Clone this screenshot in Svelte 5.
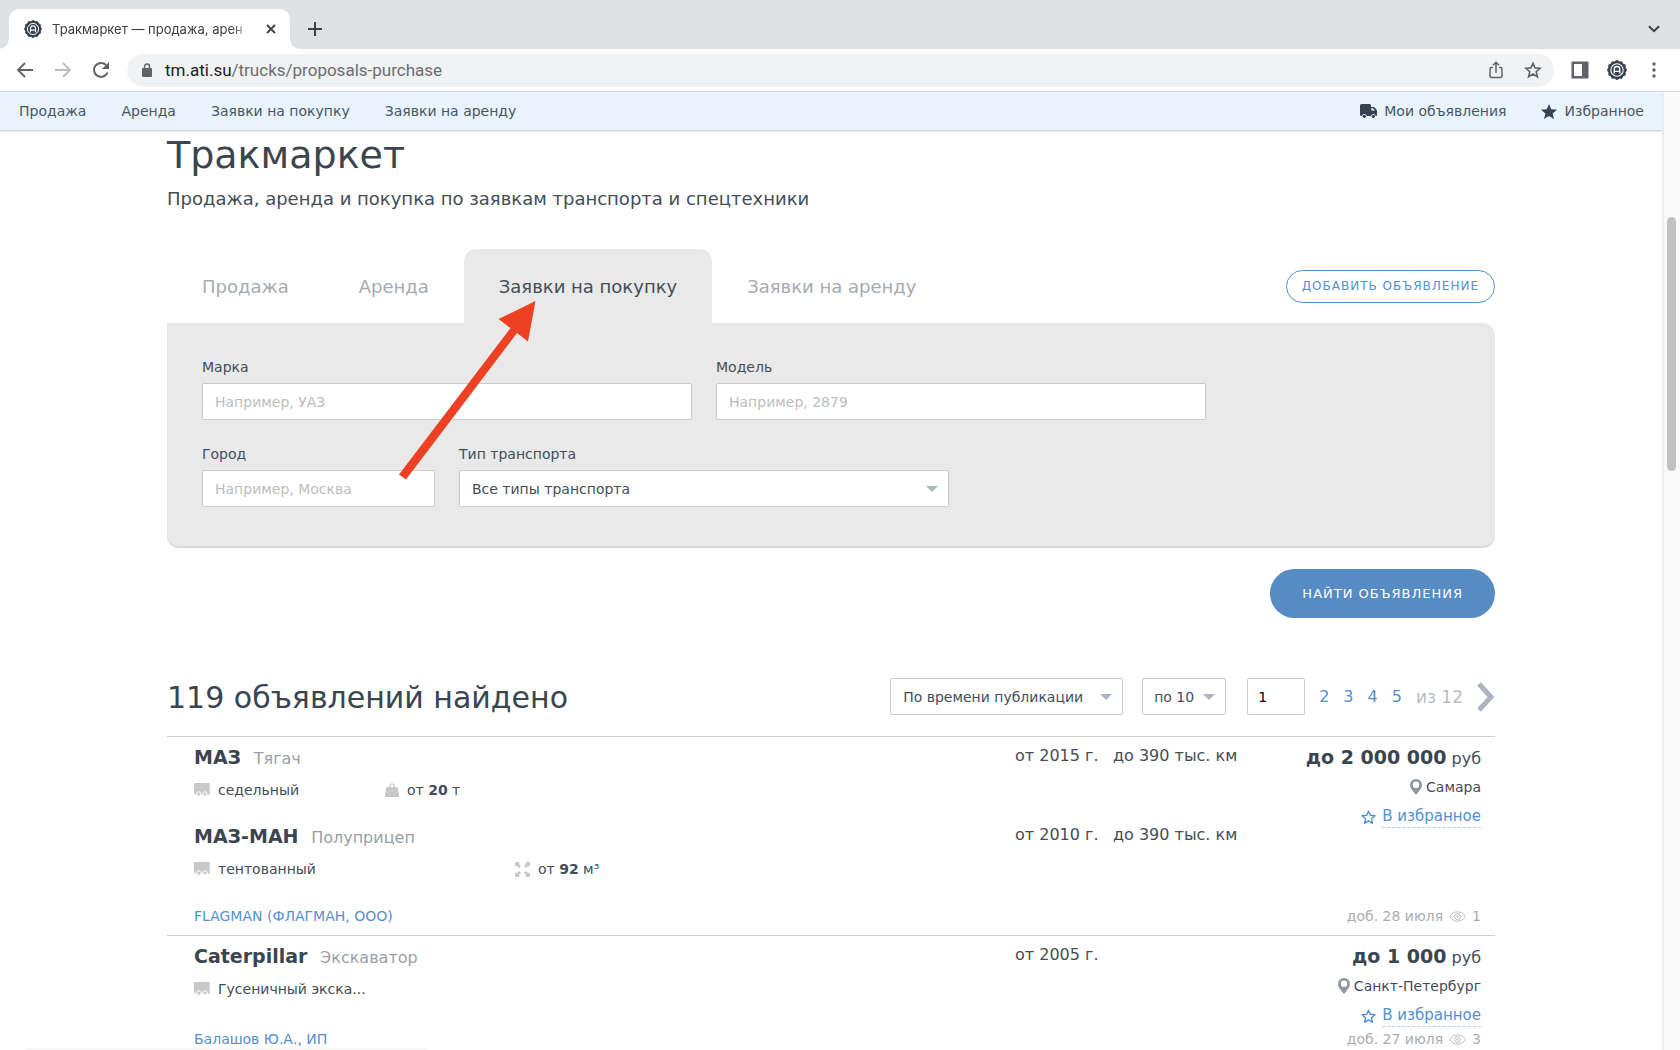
<script>
  let brand = $state("");
  let model = $state("");
  let city = $state("");
  let page = $state("1");
  let activeTab = $state(2);

  const navLinks = ["Продажа", "Аренда", "Заявки на покупку", "Заявки на аренду"];
  const pages = [2, 3, 4, 5];

  // bumps around the edge of the round logo
  const bumps = Array.from({ length: 12 }, (_, i) => ({
    x: 10 + 8 * Math.cos((i * Math.PI) / 6),
    y: 10 + 8 * Math.sin((i * Math.PI) / 6)
  }));

  const offers = [
    {
      vehicles: [
        {
          name: "МАЗ",
          type: "Тягач",
          body: "седельный",
          weight: "20",
          year: "от 2015 г.",
          mileage: "до 390 тыс. км"
        },
        {
          name: "МАЗ-МАН",
          type: "Полуприцеп",
          body: "тентованный",
          volume: "92",
          year: "от 2010 г.",
          mileage: "до 390 тыс. км"
        }
      ],
      price: "до 2 000 000",
      city: "Самара",
      firm: "FLAGMAN (ФЛАГМАН, ООО)",
      added: "доб. 28 июля",
      views: 1
    },
    {
      vehicles: [
        {
          name: "Caterpillar",
          type: "Экскаватор",
          body: "Гусеничный экска...",
          year: "от 2005 г."
        }
      ],
      price: "до 1 000",
      city: "Санкт-Петербург",
      firm: "Балашов Ю.А., ИП",
      added: "доб. 27 июля",
      views: 3
    }
  ];
</script>

{#snippet logo(size)}
  <svg width={size} height={size} viewBox="0 0 20 20" aria-hidden="true">
    <g fill="#36424f">
      <circle cx="10" cy="10" r="9" />
      {#each bumps as b}
        <circle cx={b.x} cy={b.y} r="1.9" />
      {/each}
    </g>
    <circle cx="10" cy="10" r="6.2" fill="none" stroke="#fff" stroke-width="1.1" />
    <path d="M7.2 13.6V9.3a2.8 2.8 0 0 1 5.6 0v4.3M7.2 11.3h5.6" fill="none" stroke="#fff" stroke-width="1.3" />
  </svg>
{/snippet}

{#snippet star()}
  <svg width="15" height="15" viewBox="0 0 15 15" aria-hidden="true">
    <path
      d="M7.5 1.2l1.8 4.1 4.7.4-3.6 3 1.1 4.6-4-2.5-4 2.5 1.100-4.600L1 5.700l4.700-.4z"
      fill="none"
      stroke="#5290d0"
      stroke-width="1.4"
      stroke-linejoin="round" />
  </svg>
{/snippet}

<div class="window">
  <div class="tabstrip">
    <div class="browser-tab">
      {@render logo(18)}
      <span class="tab-title">Тракмаркет — продажа, арен</span>
      <button class="icon-btn" aria-label="Закрыть вкладку">
        <svg width="12" height="12" viewBox="0 0 12 12">
          <path d="M2 2l8 8M10 2l-8 8" stroke="#3c4043" stroke-width="1.8" />
        </svg>
      </button>
    </div>
    <button class="icon-btn new-tab" aria-label="Новая вкладка">
      <svg width="16" height="16" viewBox="0 0 16 16">
        <path d="M8 1v14M1 8h14" stroke="#3c4043" stroke-width="2" />
      </svg>
    </button>
    <button class="icon-btn tab-search" aria-label="Поиск вкладок">
      <svg width="12" height="8" viewBox="0 0 12 8">
        <path d="M1 1.2l5 5 5-5" fill="none" stroke="#3c4043" stroke-width="2" />
      </svg>
    </button>
  </div>

  <div class="toolbar">
    <div class="history">
      <button class="icon-btn" aria-label="Назад">
        <svg width="18" height="18" viewBox="0 0 18 18">
          <path d="M17 9H2.5M9 2L2 9l7 7" fill="none" stroke="#5f6368" stroke-width="1.8" />
        </svg>
      </button>
      <button class="icon-btn" aria-label="Вперёд">
        <svg width="18" height="18" viewBox="0 0 18 18">
          <path d="M1 9h14.5M9 2l7 7-7 7" fill="none" stroke="#babcbe" stroke-width="1.8" />
        </svg>
      </button>
      <button class="icon-btn" aria-label="Обновить">
        <svg width="18" height="18" viewBox="0 0 18 18">
          <path d="M15.5 11.5A7 7 0 1 1 14 4" fill="none" stroke="#5f6368" stroke-width="2" />
          <path d="M17 1v7h-7z" fill="#5f6368" />
        </svg>
      </button>
    </div>
    <div class="address">
      <svg width="12" height="14" viewBox="0 0 12 14" aria-hidden="true">
        <rect x="1" y="5" width="10" height="9" rx="1" fill="#5f6368" />
        <path d="M3.5 6V3.5a2.5 2.5 0 0 1 5 0V6" fill="none" stroke="#5f6368" stroke-width="1.5" />
      </svg>
      <span class="url"><b>tm.ati.su</b>/trucks/proposals-purchase</span>
      <button class="icon-btn" aria-label="Поделиться">
        <svg width="16" height="18" viewBox="0 0 16 18">
          <path
            d="M5 6.500H3a1 1 0 0 0-1 1V15a1.500 1.500 0 0 0 1.500 1.500h9A1.500 1.500 0 0 0 14 15V7.500a1 1 0 0 0-1-1h-2M8 12V1.500M5 4.300l3-3 3 3"
            fill="none"
            stroke="#5f6368"
            stroke-width="1.5" />
        </svg>
      </button>
      <button class="icon-btn" aria-label="В закладки">
        <svg width="18" height="18" viewBox="0 0 18 18">
          <path
            d="M9 2.200l2 4.700 5.100.4-3.900 3.400 1.200 5L9 13l-4.400 2.700 1.200-5L1.900 7.300 7 6.900z"
            fill="none"
            stroke="#5f6368"
            stroke-width="1.6" />
        </svg>
      </button>
    </div>
    <div class="tools">
      <button class="icon-btn" aria-label="Боковая панель">
        <svg width="18" height="18" viewBox="0 0 18 18">
          <path d="M.5.5h17v17H.5zM3 3v12h8V3z" fill="#5f6368" fill-rule="evenodd" />
        </svg>
      </button>
      <button class="icon-btn" aria-label="Профиль">{@render logo(20)}</button>
      <button class="icon-btn" aria-label="Меню">
        <svg width="4" height="16" viewBox="0 0 4 16" fill="#5f6368">
          <circle cx="2" cy="2" r="1.7" />
          <circle cx="2" cy="8" r="1.7" />
          <circle cx="2" cy="14" r="1.7" />
        </svg>
      </button>
    </div>
  </div>

  <div class="viewport">
    <div class="site">
      <nav class="topnav">
        {#each navLinks as link}
          <a href="#top">{link}</a>
        {/each}
        <a href="#mine" class="push">
          <svg width="17" height="14" viewBox="0 0 17 14" fill="#36424f" aria-hidden="true">
            <path
              d="M1.500 0h8A1.500 1.500 0 0 1 11 1.500V3h2.300a2 2 0 0 1 1.400.6l1.700 1.900a2 2 0 0 1 .6 1.400V11a1 1 0 0 1-1 1h-.3a2.400 2.400 0 0 0-4.700 0H6.700a2.400 2.400 0 0 0-4.700 0h-.5A1.500 1.500 0 0 1 0 10.500v-9A1.500 1.500 0 0 1 1.500 0zm9.800 4.300v2.200h3.700l-2-2.200z"
              fill-rule="evenodd" />
            <circle cx="4.4" cy="12.3" r="1.6" />
            <circle cx="13.4" cy="12.3" r="1.6" />
          </svg>
          Мои объявления
        </a>
        <a href="#favourites">
          <svg width="16" height="15" viewBox="0 0 16 15" fill="#36424f" aria-hidden="true">
            <path d="M8 0l2.200 5.300 5.800.4-4.400 3.700L13 15l-5-3.100L3 15l1.400-5.600L0 5.700l5.800-.4z" />
          </svg>
          Избранное
        </a>
      </nav>

      <main>
        <h1>Тракмаркет</h1>
        <p class="lead">Продажа, аренда и покупка по заявкам транспорта и спецтехники</p>

        <form class="search" onsubmit={(e) => e.preventDefault()}>
          <div class="search-tabs">
            {#each navLinks as link, i}
              <button
                type="button"
                class="search-tab"
                class:active={activeTab === i}
                onclick={() => (activeTab = i)}>{link}</button>
            {/each}
            <button type="button" class="add">Добавить объявление</button>
          </div>

          <div class="filters">
            <div class="field wide">
              <label for="brand">Марка</label>
              <input id="brand" placeholder="Например, УАЗ" bind:value={brand} />
            </div>
            <div class="field wide">
              <label for="model">Модель</label>
              <input id="model" placeholder="Например, 2879" bind:value={model} />
            </div>
            <div class="field first">
              <label for="city">Город</label>
              <input id="city" placeholder="Например, Москва" bind:value={city} />
            </div>
            <div class="field wide">
              <label for="kind">Тип транспорта</label>
              <div class="select">
                <select id="kind"><option>Все типы транспорта</option></select>
              </div>
            </div>
          </div>

          <button class="find">Найти объявления</button>

          <svg class="pointer" width="138" height="180" viewBox="0 0 138 180" aria-hidden="true">
            <path d="M136.500 0L99.500 18l12 9L0 173.500l7 5L118 32l11 8.500z" fill="#ee4023" />
          </svg>
        </form>

        <div class="results-head">
          <h2>119 объявлений найдено</h2>
          <div class="select sort">
            <select aria-label="Сортировка"><option>По времени публикации</option></select>
          </div>
          <div class="select per-page">
            <select aria-label="На странице"><option>по 10</option></select>
          </div>
          <div class="pager">
            <input aria-label="Страница" bind:value={page} />
            {#each pages as n}
              <a href="#page-{n}">{n}</a>
            {/each}
            <span class="total">из 12</span>
            <button class="icon-btn" aria-label="Следующая страница">
              <svg width="18" height="30" viewBox="0 0 18 30">
                <path d="M2 2l12 13L2 28" fill="none" stroke="#adb5bf" stroke-width="5" />
              </svg>
            </button>
          </div>
        </div>

        {#each offers as offer}
          <article class="offer">
            <div class="vehicles">
              {#each offer.vehicles as v}
                <section class="vehicle">
                  <div class="vehicle-main">
                    <h3>{v.name} <span>{v.type}</span></h3>
                    <div class="specs">
                      <span class="spec body">
                        <svg width="16" height="14" viewBox="0 0 16 14" fill="#c9c9c9" aria-hidden="true">
                          <path d="M1 0h14a.6.6 0 0 1 .6.6V9.500h.4v2H1.500L0 10V1a1 1 0 0 1 1-1z" />
                          <g stroke="#fff" stroke-width="1">
                            <circle cx="4.8" cy="11" r="2.2" />
                            <circle cx="11" cy="11" r="2.2" />
                          </g>
                        </svg>
                        <span>{v.body}</span>
                      </span>
                      <span class="spec weight">
                        {#if v.weight}
                          <svg width="14" height="14" viewBox="0 0 14 14" fill="#c9c9c9" aria-hidden="true">
                            <path d="M2 4h10a1 1 0 0 1 1 .8l1 8.200a.9.9 0 0 1-1 1H1a.9.9 0 0 1-1-1l1-8.200A1 1 0 0 1 2 4z" />
                            <circle cx="7" cy="2.8" r="2" fill="none" stroke="#c9c9c9" stroke-width="1.3" />
                          </svg>
                          <span>от <b>{v.weight}</b> т</span>
                        {/if}
                      </span>
                      {#if v.volume}
                        <span class="spec">
                          <svg width="15" height="15" viewBox="0 0 15 15" fill="#c9c9c9" aria-hidden="true">
                            <path
                              d="M0 0h5L3.800 1.600 6 4 4 6 1.600 3.800 0 5zM15 0h-5l1.200 1.600L9 4l2 2 2.400-2.200L15 5zM0 15h5l-1.200-1.600L6 11 4 9l-2.400 2.200L0 10zM15 15h-5l1.200-1.600L9 11l2-2 2.400 2.200L15 10z" />
                          </svg>
                          <span>от <b>{v.volume}</b> м³</span>
                        </span>
                      {/if}
                    </div>
                  </div>
                  <div class="year">{v.year}</div>
                  <div class="mileage">{v.mileage ?? ""}</div>
                </section>
              {/each}
              <a class="firm" href="#firm">{offer.firm}</a>
            </div>

            <div class="deal">
              <div class="price"><b>{offer.price}</b> руб</div>
              <div class="place">
                <svg width="12" height="16" viewBox="0 0 12 16" aria-hidden="true">
                  <path
                    d="M6 0a6 6 0 0 1 6 6c0 3.500-3.500 6.500-6 10C3.500 12.500 0 9.500 0 6a6 6 0 0 1 6-6zm0 2.500a3.200 3.200 0 1 0 0 6.400 3.200 3.200 0 0 0 0-6.400z"
                    fill="#8e979c"
                    fill-rule="evenodd" />
                </svg>
                {offer.city}
              </div>
              <a class="fav" href="#fav">{@render star()}<span>В избранное</span></a>
              <div class="added">
                {offer.added}
                <svg width="17" height="11" viewBox="0 0 17 11" fill="none" stroke="#b9bdc1" aria-hidden="true">
                  <path d="M.7 5.500C4.500-.8 12.500-.8 16.300 5.500 12.500 11.800 4.500 11.800.7 5.500z" />
                  <circle cx="8.5" cy="5.5" r="3" />
                  <circle cx="8.5" cy="5.5" r=".8" />
                </svg>
                {offer.views}
              </div>
            </div>
          </article>
        {/each}
      </main>
    </div>
    <div class="scrollbar"><div class="thumb"></div></div>
  </div>
  <div class="status"></div>
</div>

<style>
  :global(body) {
    background: #fff;
  }
  .window {
    position: relative;
    display: flex;
    flex-direction: column;
    height: 100vh;
    overflow: hidden;
    font-family: "DejaVu Sans", Verdana, sans-serif;
    font-size: 14px;
    line-height: 20px;
    color: #434d58;
  }
  button,
  input,
  select {
    font: inherit;
    color: inherit;
    box-sizing: border-box;
  }
  a {
    color: #5290d0;
    text-decoration: none;
  }
  svg {
    flex: none;
  }
  .icon-btn {
    display: flex;
    align-items: center;
    padding: 0;
    border: 0;
    background: none;
  }

  /* browser chrome */
  .tabstrip {
    flex: none;
    display: flex;
    align-items: flex-end;
    height: 49px;
    padding: 0 20px 0 9px;
    box-sizing: border-box;
    background: #dee0e4;
  }
  .browser-tab {
    position: relative;
    display: flex;
    align-items: center;
    gap: 10px;
    width: 281px;
    height: 40px;
    padding: 0 13px 0 15px;
    box-sizing: border-box;
    border-radius: 10px 10px 0 0;
    background: #fff;
  }
  .browser-tab::before,
  .browser-tab::after {
    content: "";
    position: absolute;
    bottom: 0;
    left: -9px;
    width: 9px;
    height: 9px;
    background: radial-gradient(circle at 0 0, transparent 8px, #fff 9px);
  }
  .browser-tab::after {
    left: 100%;
    background: radial-gradient(circle at 100% 0, transparent 8px, #fff 9px);
  }
  .tab-title {
    flex: 1;
    overflow: hidden;
    white-space: nowrap;
    font-family: Inter, Roboto, sans-serif;
    font-size: 13px;
    color: #3c4043;
    mask-image: linear-gradient(to right, #000 88%, transparent);
  }
  .new-tab {
    height: 40px;
    margin-left: 17px;
  }
  .tab-search {
    height: 40px;
    margin-left: auto;
  }
  .toolbar {
    flex: none;
    display: flex;
    align-items: center;
    gap: 17px;
    height: 43px;
    padding: 0 24px 0 16px;
    box-sizing: border-box;
    border-bottom: 1px solid #d9dbde;
    background: #fff;
  }
  .history {
    display: flex;
    gap: 20px;
  }
  .address {
    flex: 1;
    display: flex;
    align-items: center;
    gap: 20px;
    height: 33px;
    padding: 0 12px 0 14px;
    border-radius: 17px;
    background: #f1f2f4;
  }
  .url {
    flex: 1;
    margin-left: -8px;
    font: 17px/20px Roboto, sans-serif;
    color: #6a6d71;
  }
  .url b {
    font-weight: 400;
    color: #202124;
  }
  .tools {
    display: flex;
    align-items: center;
    gap: 18px;
  }
  .tools .icon-btn:last-child {
    margin-left: 7px;
  }

  /* page */
  .viewport {
    flex: 1;
    display: flex;
    min-height: 0;
  }
  .site {
    flex: 1;
    min-width: 0;
    overflow: hidden;
  }
  .scrollbar {
    flex: none;
    width: 18px;
    box-sizing: border-box;
    padding: 125px 3px 0;
    border-left: 2px solid #ececec;
    background: #fafafa;
  }
  .thumb {
    width: 9px;
    height: 254px;
    border-radius: 5px;
    background: #c1c1c1;
  }
  .topnav {
    display: flex;
    align-items: center;
    gap: 35px;
    height: 38px;
    padding: 0 18px 0 19px;
    background: #e8f3fe;
    box-shadow: 0 1px 2px rgba(0, 0, 0, 0.25);
  }
  .topnav a {
    display: flex;
    align-items: center;
    gap: 7px;
    color: #4b5560;
  }
  .topnav .push {
    margin-left: auto;
  }
  main {
    max-width: 1328px;
    margin: 0 auto;
  }
  h1,
  h2,
  h3,
  p {
    margin: 0;
    font-weight: 400;
    color: #3b4550;
  }
  h1 {
    font-size: 38px;
    line-height: 50px;
  }
  .lead {
    padding: 6px 0 37px;
    font-size: 18px;
    line-height: 26px;
    color: #434d58;
  }

  /* search form */
  .search {
    position: relative;
    display: flex;
    flex-direction: column;
  }
  .search-tabs {
    display: flex;
    align-items: center;
  }
  .search-tab {
    height: 74px;
    padding: 2px 35px 0;
    border: 0;
    border-radius: 12px 12px 0 0;
    background: none;
    font-size: 18px;
    color: #a6abb1;
  }
  .search-tab.active {
    background: #e9e9e9;
    color: #434d58;
  }
  .add {
    height: 33px;
    margin-left: auto;
    padding: 0 15px;
    border: 1px solid #5290d0;
    border-radius: 17px;
    background: #fff;
    font-size: 12px;
    letter-spacing: 1px;
    text-transform: uppercase;
    color: #5290d0;
  }
  .filters {
    display: grid;
    grid-template-columns: repeat(5, 1fr);
    gap: 24px;
    padding: 34px 32px 39px 35px;
    border-bottom: 2px solid #dadada;
    border-radius: 0 12px 12px 12px;
    background: #e9e9e9;
  }
  .field {
    display: flex;
    flex-direction: column;
    gap: 6px;
  }
  .wide {
    grid-column: span 2;
  }
  .first {
    grid-column: 1;
  }
  input,
  select {
    width: 100%;
    height: 37px;
    padding: 0 12px;
    border: 1px solid #ccc;
    border-radius: 2px;
    background: #fff;
    appearance: none;
  }
  input::placeholder {
    color: #bdbdbd;
    opacity: 1;
  }
  .select {
    position: relative;
  }
  .select::after {
    content: "";
    position: absolute;
    right: 11px;
    top: 16px;
    border: 6px solid transparent;
    border-top-color: #adb5bf;
    border-bottom: 0;
    pointer-events: none;
  }
  .find {
    align-self: flex-end;
    height: 49px;
    margin-top: 21px;
    padding: 0 32px;
    border: 0;
    border-radius: 25px;
    background: #568bc4;
    font-size: 13px;
    letter-spacing: 1px;
    text-transform: uppercase;
    color: #fff;
  }
  .pointer {
    position: absolute;
    left: 232px;
    top: 52px;
    pointer-events: none;
  }

  /* results */
  .results-head {
    display: flex;
    align-items: center;
    gap: 19px;
    padding: 60px 0 20px;
  }
  h2 {
    flex: 1;
    padding-top: 3px;
    font-size: 30px;
    line-height: 34px;
  }
  .sort {
    width: 233px;
  }
  .per-page {
    width: 84px;
  }
  .per-page select {
    padding: 0 11px;
  }
  .pager {
    display: flex;
    align-items: center;
    gap: 14px;
    margin-left: 2px;
    font-size: 16px;
  }
  .pager input {
    width: 58px;
    padding: 0 10px;
    font-size: 14px;
    color: #000;
  }
  .total {
    font-size: 17px;
    color: #b9bdc1;
  }
  .offer {
    display: flex;
    padding: 8px 14px 8px 27px;
    border-top: 1px solid #ccc;
  }
  .results-head + .offer {
    margin-top: 1px;
  }
  .vehicles {
    flex: 1;
    display: flex;
    flex-direction: column;
  }
  .vehicle {
    display: flex;
    height: 79px;
    font-size: 16px;
    line-height: 22px;
  }
  .vehicle-main {
    flex: 1;
  }
  .year {
    width: 98px;
  }
  .mileage {
    width: 133px;
    white-space: nowrap;
  }
  h3 {
    font-size: 19px;
    line-height: 24px;
    font-weight: 700;
  }
  h3 span {
    margin-left: 6px;
    font-size: 16px;
    font-weight: 400;
    color: #9a9fa5;
  }
  .specs {
    display: flex;
    margin-top: 8px;
    font-size: 14px;
  }
  .spec {
    display: flex;
    align-items: center;
    gap: 8px;
  }
  .body {
    width: 191px;
  }
  .weight {
    width: 130px;
  }
  .firm {
    margin-top: auto;
    padding-top: 2px;
    line-height: 22px;
  }
  .deal {
    display: flex;
    flex-direction: column;
    align-items: flex-end;
    width: 235px;
  }
  .price {
    font-size: 16px;
    line-height: 24px;
  }
  .price b {
    font-size: 19px;
    color: #3b4550;
  }
  .place {
    display: flex;
    align-items: center;
    gap: 4px;
    margin-top: 6px;
  }
  .fav {
    display: flex;
    align-items: center;
    gap: 6px;
    margin: 9px 0 1px;
    font-size: 15px;
  }
  .fav span {
    padding-bottom: 1px;
    border-bottom: 1px dashed #b5cfea;
  }
  .added {
    display: flex;
    align-items: center;
    gap: 6px;
    margin-top: auto;
    line-height: 22px;
    color: #a9adb2;
  }
  .status {
    position: absolute;
    left: 24px;
    bottom: -21px;
    width: 405px;
    height: 20px;
    border-radius: 4px 4px 0 0;
    box-shadow: 0 0 3px rgba(0, 0, 0, 0.4);
  }
</style>
